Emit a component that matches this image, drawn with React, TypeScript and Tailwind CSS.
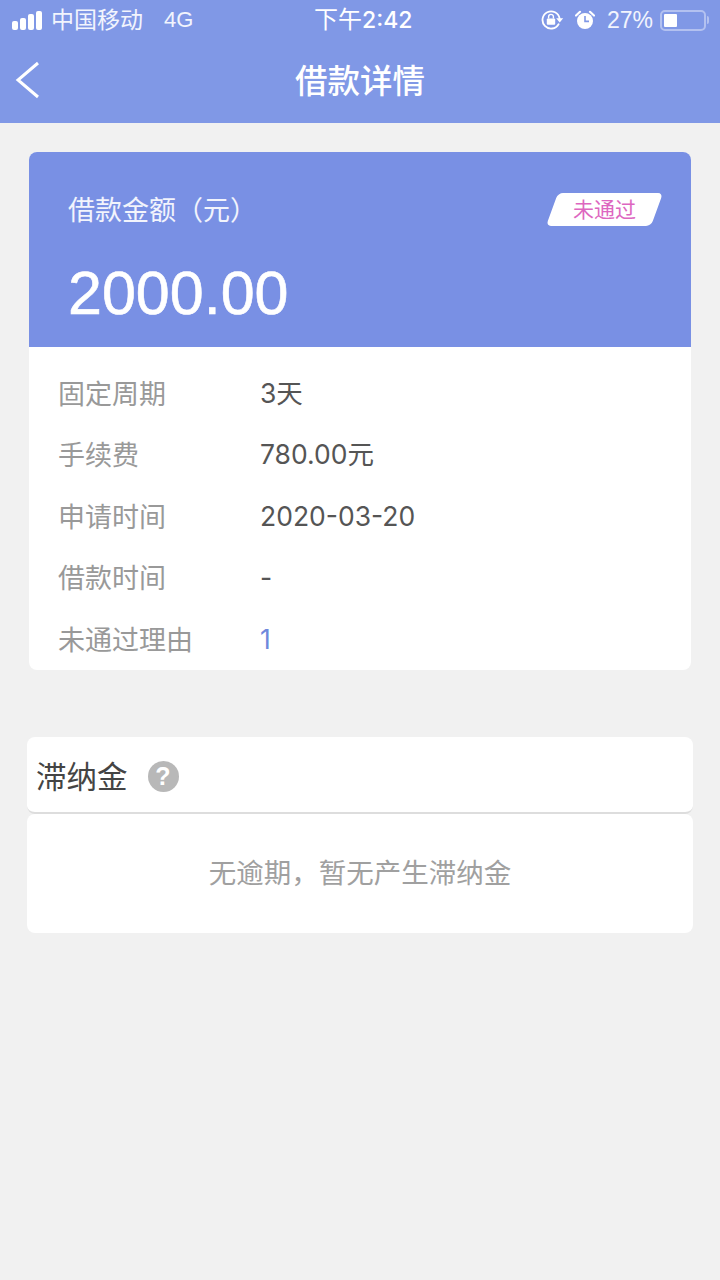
const sans = "font-['Liberation_Sans','Noto_Sans_CJK_SC',sans-serif]";

function Signal() {
  return (
    <div className="flex items-end gap-[2px]">
      <div className="h-[9px] w-[6px] rounded-[2px] bg-white" />
      <div className="h-[12px] w-[6px] rounded-[2px] bg-white" />
      <div className="h-[16px] w-[6px] rounded-[2px] bg-white" />
      <div className="h-[19px] w-[6px] rounded-[2px] bg-white" />
    </div>
  );
}

function LockIcon() {
  return (
    <svg width="23" height="20" viewBox="0 0 23 20" fill="none">
      <path d="M17.6 14.2A8.6 8.6 0 1 1 18.6 8.5" stroke="white" strokeWidth="1.8" strokeLinecap="round" />
      <path d="M15.2 8.2h7l-3.5 4.2z" fill="white" />
      <rect x="5.8" y="8.4" width="8.4" height="6.4" rx="1" fill="white" />
      <path d="M7.6 8.6V6.8a2.4 2.4 0 0 1 4.8 0v1.8" stroke="white" strokeWidth="1.4" />
    </svg>
  );
}

function AlarmIcon() {
  return (
    <svg width="20" height="20" viewBox="0 0 20 20" fill="none">
      <circle cx="10" cy="11" r="8" fill="white" />
      <path d="M10 6v5.4h4" stroke="#8098e6" strokeWidth="1.6" />
      <path d="M1 5.5 5 1.8M19 5.5 15 1.8" stroke="white" strokeWidth="2.2" strokeLinecap="round" />
    </svg>
  );
}

function Row({ label, value, valueClass }: { label: string; value: string; valueClass?: string }) {
  return (
    <div className="flex h-[61.5px] items-center">
      <div className="w-[202px] pt-[3px] text-[27px] leading-none text-[#999999]">{label}</div>
      <div className={`pb-[2px] font-['Inter','Noto_Sans_CJK_SC',sans-serif] text-[26.5px] leading-none ${valueClass ?? 'text-[#555555]'}`}>{value}</div>
    </div>
  );
}

export default function App() {
  return (
    <div className={`flex min-h-[1280px] w-[720px] flex-col bg-[#f1f1f1] ${sans}`}>
      <header className="h-[123px] bg-[#8098e6] text-white">
        <div className="flex h-[40px] items-center pl-[12px] pr-[11px]">
          <div className="flex w-[302px] items-center">
            <Signal />
            <span className="ml-[9px] text-[23px] leading-none text-white/90">中国移动</span>
            <span className="ml-[21px] text-[22px] leading-none text-white/90">4G</span>
          </div>
          <div className="flex items-center text-[24px] leading-none">
            下午<span className="font-['Inter'] text-[23px] font-medium">2:42</span>
          </div>
          <div className="flex flex-1 items-center justify-end">
            <LockIcon />
            <div className="ml-[11px]"><AlarmIcon /></div>
            <span className="ml-[12px] text-[23px] leading-none text-white/90">27%</span>
            <div className="ml-[7px] flex h-[21px] w-[46px] items-center rounded-[5px] border-2 border-white/40 p-[2px]">
              <div className="h-full w-[13px] rounded-[1px] bg-white" />
            </div>
            <div className="ml-[1px] h-[8px] w-[2px] rounded-r bg-white/40" />
          </div>
        </div>
        <div className="relative flex h-[83px] items-center justify-center pt-[1px]">
          <svg className="absolute left-[15px] top-[21px]" width="26" height="38" viewBox="0 0 26 38" fill="none">
            <path d="M23 2 3 19l20 17" stroke="white" strokeWidth="3" />
          </svg>
          <h1 className="text-[32.5px] font-medium leading-none">借款详情</h1>
        </div>
      </header>

      <section className="mx-[29px] mt-[29px] h-[518px] overflow-hidden rounded-[8px] bg-white">
        <div className="relative h-[195px] bg-[#7990e4] pl-[39px] text-white">
          <div className="pt-[46px] text-[27px] leading-none text-white/90">借款金额（元）</div>
          <div className="mt-[38px] text-[61px] leading-none [-webkit-text-stroke:0.6px_white]">2000.00</div>
          <div className="absolute left-[523px] top-[41px] flex h-[33px] w-[105px] -skew-x-[20deg] items-center justify-center rounded-[5px] bg-white">
            <span className="skew-x-[20deg] text-[21px] leading-none text-[#dd66c0]">未通过</span>
          </div>
        </div>
        <div className="pl-[29px] pt-[16px]">
          <Row label="固定周期" value="3天" />
          <Row label="手续费" value="780.00元" />
          <Row label="申请时间" value="2020-03-20" />
          <Row label="借款时间" value="-" />
          <Row label="未通过理由" value="1" valueClass="text-[#6f88dc]" />
        </div>
      </section>

      <section className="mx-[27px] mt-[67px] h-[196px]">
        <div className="flex h-[77px] items-center rounded-[8px] border-b-2 border-[#dddddd] bg-white pl-[9px] pt-[4px]">
          <span className="pt-[2px] text-[30.5px] leading-none text-[#444444]">滞纳金</span>
          <span className="ml-[20px] flex h-[31px] w-[31px] items-center justify-center rounded-full bg-[#b8b8b8] text-[25px] font-bold leading-none text-white">?</span>
        </div>
        <div className="flex h-[119px] items-center justify-center rounded-[8px] bg-white text-[27.5px] leading-none text-[#a0a0a0]">
          无逾期，暂无产生滞纳金
        </div>
      </section>
    </div>
  );
}
